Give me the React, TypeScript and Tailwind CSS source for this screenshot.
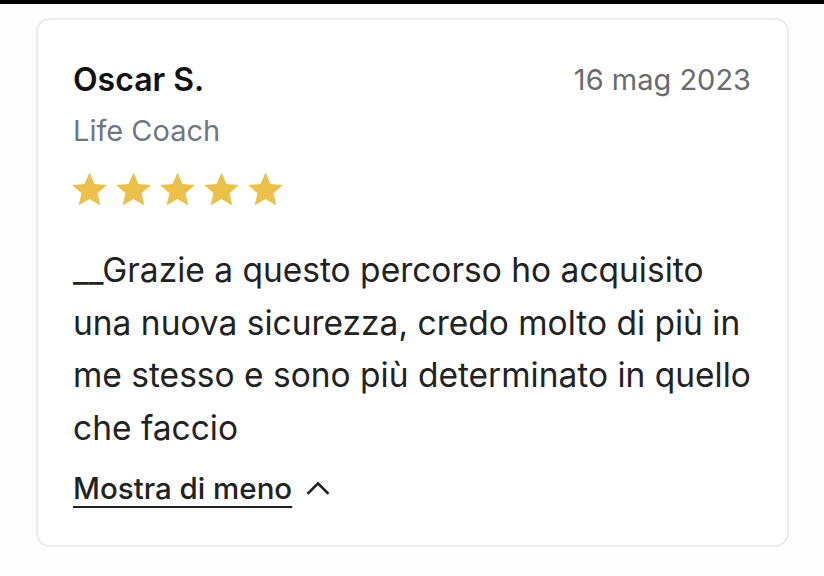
import React from "react";

const Star: React.FC = () => (
  <svg width="35" height="34" viewBox="1.4 1.6 21.2 20.4" fill="#ecc14a">
    <path d="M12 1.8l3.05 6.9 7.5.7-5.66 5 1.67 7.36L12 17.9l-6.56 3.86 1.67-7.36-5.66-5 7.5-.7z" />
  </svg>
);

const App: React.FC = () => {
  return (
    <div
      className="w-[824px] h-[576px] bg-[#fdfdfd] border-t-4 border-black overflow-hidden"
      style={{ fontFamily: "Inter, 'Noto Sans', sans-serif" }}
    >
      <div className="ml-[36px] mt-[14px] w-[753px] h-[529px] bg-white border-2 border-[#ececec] rounded-[14px] px-[35px] pt-[40px]">
        <div className="flex justify-between items-start">
          <div className="text-[32px] font-semibold text-[#111] leading-[40px]">Oscar S.</div>
          <div className="text-[29px] text-[#6b6b6b] leading-[40px] mr-[1px]">16 mag 2023</div>
        </div>
        <div className="text-[29px] text-[#717782] leading-[40px] mt-[11px]">Life Coach</div>
        <div className="flex gap-[9px] mt-[21px] ml-[-1px]">
          <Star />
          <Star />
          <Star />
          <Star />
          <Star />
        </div>
        <p className="text-[33.5px] text-[#222] leading-[52.5px] mt-[38px] w-[685px]">
          __Grazie a questo percorso ho acquisito una nuova sicurezza, credo molto di più in me
          stesso e sono più determinato in quello che faccio
        </p>
        <div className="flex items-center gap-[12px] mt-[14px] h-[40px]">
          <span className="text-[29.5px] font-medium text-[#222] leading-[40px] underline underline-offset-[7px] decoration-[2px]">
            Mostra di meno
          </span>
          <svg width="28" height="28" viewBox="0 0 24 24" fill="none" stroke="#222" strokeWidth="2.3">
            <path d="M3 17l9-9 9 9" />
          </svg>
        </div>
      </div>
    </div>
  );
};

export default App;
